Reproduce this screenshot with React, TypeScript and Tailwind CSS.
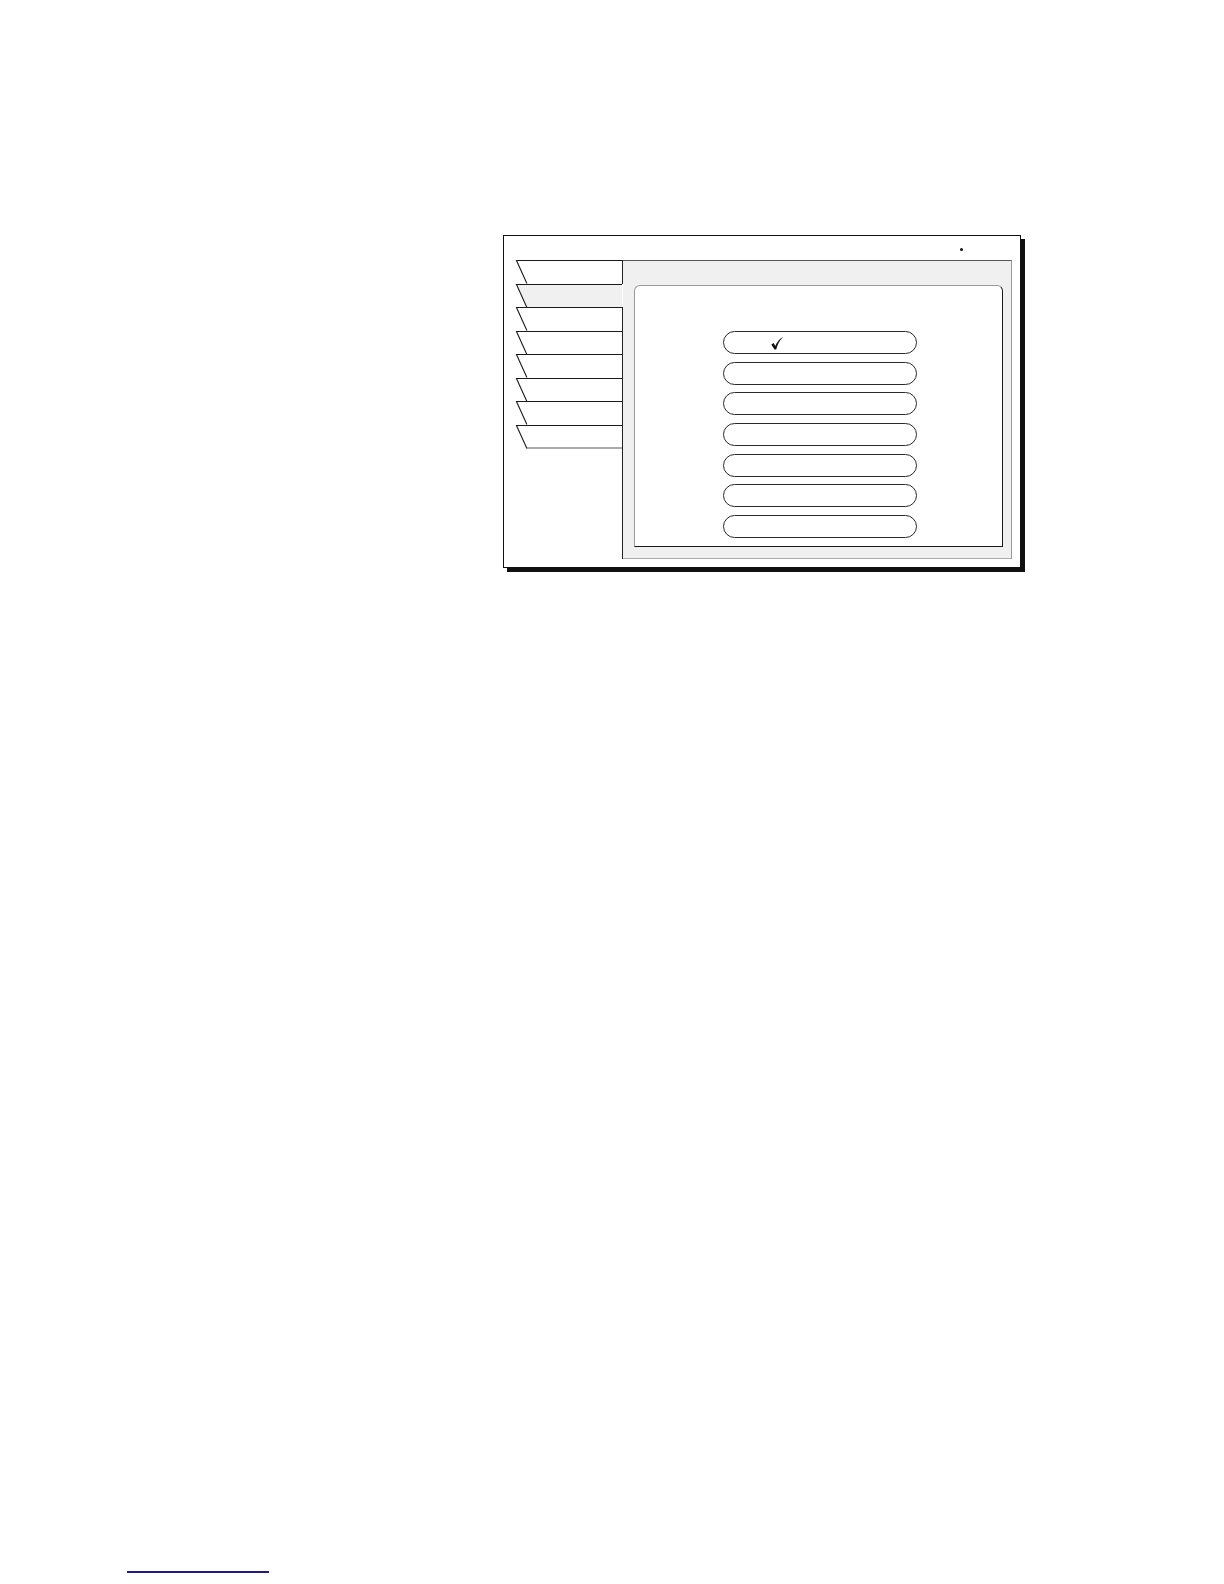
import React from "react";

const TAB_COUNT = 8;
const SELECTED = 1;
const PILL_COUNT = 7;

// Slanted tab edge: top-left corner sits 11px left of the bottom-left corner.
function TabShape({ selected, last }: { selected: boolean; last: boolean }) {
  return (
    <svg
      className="absolute inset-0 h-full w-full overflow-visible"
      viewBox="0 0 107 23.5"
      preserveAspectRatio="none"
    >
      <polygon
        points="0.5,0.5 107,0.5 107,23.5 11,23.5"
        fill={selected ? "#f0f0f0" : "#ffffff"}
        stroke="none"
      />
      <polyline points="107,0.5 0.5,0.5 11,23.5" fill="none" stroke="#1a1a1a" strokeWidth="1.1" />
      {last && <line x1="11" y1="23" x2="107" y2="23" stroke="#555" strokeWidth="1" />}
    </svg>
  );
}

function Tab({ index }: { index: number }) {
  const selected = index === SELECTED;
  const last = index === TAB_COUNT - 1;
  return (
    <div
      className={
        selected
          ? "relative h-[23.5px] shrink-0 border-r border-transparent"
          : "relative h-[23.5px] shrink-0 border-r border-[#222]"
      }
    >
      <TabShape selected={selected} last={last} />
    </div>
  );
}

function CheckMark() {
  return (
    <svg width="12" height="13" viewBox="0 0 12 13" className="block">
      <path
        d="M0.3 7.4 L2.7 6.1 L4.3 9.1 C5.7 5.5 7.9 2.3 11.4 0.2 L11.7 0.6 C8.7 3.2 6.6 7.4 5.2 12.6 L3.5 12.6 Z"
        fill="#111"
      />
    </svg>
  );
}

function Pill({ checked }: { checked?: boolean }) {
  return (
    <div className="flex h-[23px] w-[194px] shrink-0 items-center rounded-full border border-[#2a2a2a] bg-white">
      {checked && (
        <span className="ml-[47px] mt-[1px]">
          <CheckMark />
        </span>
      )}
    </div>
  );
}

export default function App() {
  return (
    <div className="relative min-h-[1584px] w-[1224px] bg-white">
      <div className="pt-[235px] pl-[503px]">
        {/* dialog frame */}
        <div className="relative flex h-[333px] w-[518px] border border-[#111] bg-white pt-[24px] pl-[12px] pr-[8px] pb-[8px] shadow-[4px_4px_0_#111]">
          <span className="absolute left-[456px] top-[12px] h-[3px] w-[3px] rounded-full bg-[#111]" />

          {/* tab strip */}
          <div className="flex w-[107px] shrink-0 flex-col">
            {Array.from({ length: TAB_COUNT }).map((_, i) => (
              <Tab key={i} index={i} />
            ))}
            <div className="flex-1 border-r border-[#222]" />
          </div>

          {/* tab page */}
          <div className="flex flex-1 flex-col border-t border-r border-b border-t-[#555] border-r-[#999] border-b-[#aaa] bg-[#f0f0f0] pt-[24px] pl-[11px] pr-[8px] pb-[11px]">
            <div className="flex flex-1 flex-col gap-[7.7px] rounded-t-[6px] border border-t-[#999] border-l-[#999] border-r-[#1a1a1a] border-b-[#1a1a1a] bg-white pt-[45px] pl-[88px]">
              {Array.from({ length: PILL_COUNT }).map((_, i) => (
                <Pill key={i} checked={i === 0} />
              ))}
            </div>
          </div>
        </div>
      </div>

      {/* link underline at the page foot */}
      <div className="ml-[127px] mt-[1003px] h-[2px] w-[142px] bg-[#1c1c86]" />
    </div>
  );
}
